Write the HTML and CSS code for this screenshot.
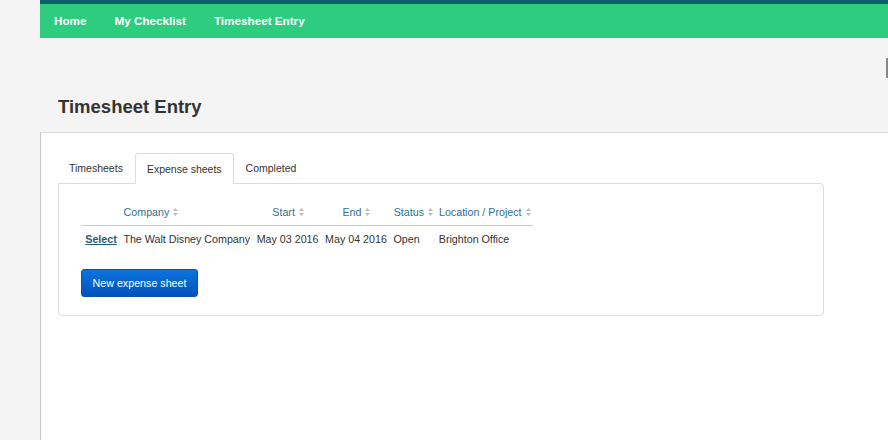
FILE: index.html
```html
<!DOCTYPE html>
<html lang="en">

<head>
    <meta charset="UTF-8">
    <meta name="viewport" content="width=device-width, initial-scale=1.0">
    <title>Timesheet Entry</title>
    <link rel="stylesheet" href="styles.css">
</head>

<body>
    <div class="page">
        <div class="top-strip"></div>
        <div class="main-nav">
            <a href="#">Home</a>
            <a href="#">My Checklist</a>
            <a href="#">Timesheet Entry</a>
        </div>

        <div class="page-header">
            <h1>Timesheet Entry</h1>
        </div>

        <div class="panel">
            <div class="tabs">
                <a href="#" class="tab">Timesheets</a>
                <a href="#" class="tab active">Expense sheets</a>
                <a href="#" class="tab">Completed</a>
            </div>
            <div class="tab-content">
                <table class="sheets">
                    <thead>
                        <tr>
                            <th></th>
                            <th>Company <span class="sort"><svg width="5" height="8" viewBox="0 0 5 8"><path d="M2.5 0 L5 3 H0 Z M2.5 8 L5 5 H0 Z"/></svg></span></th>
                            <th class="center">Start <span class="sort"><svg width="5" height="8" viewBox="0 0 5 8"><path d="M2.5 0 L5 3 H0 Z M2.5 8 L5 5 H0 Z"/></svg></span></th>
                            <th class="center">End <span class="sort"><svg width="5" height="8" viewBox="0 0 5 8"><path d="M2.5 0 L5 3 H0 Z M2.5 8 L5 5 H0 Z"/></svg></span></th>
                            <th>Status <span class="sort"><svg width="5" height="8" viewBox="0 0 5 8"><path d="M2.5 0 L5 3 H0 Z M2.5 8 L5 5 H0 Z"/></svg></span></th>
                            <th>Location / Project <span class="sort"><svg width="5" height="8" viewBox="0 0 5 8"><path d="M2.5 0 L5 3 H0 Z M2.5 8 L5 5 H0 Z"/></svg></span></th>
                        </tr>
                    </thead>
                    <tbody>
                        <tr>
                            <td><a href="#" class="select-link">Select</a></td>
                            <td>The Walt Disney Company</td>
                            <td>May 03 2016</td>
                            <td>May 04 2016</td>
                            <td>Open</td>
                            <td>Brighton Office</td>
                        </tr>
                    </tbody>
                </table>
                <button class="btn-primary">New expense sheet</button>
            </div>
        </div>
    </div>
    <div class="edge-mark"></div>
</body>

</html>
```

FILE: styles.css
```css
* {
    margin: 0;
    padding: 0;
    box-sizing: border-box;
}

body {
    font-family: 'Liberation Sans', Arial, sans-serif;
    background-color: #f4f4f4;
    color: #333;
    font-size: 10.7px;
    height: 100vh;
    overflow: hidden;
    position: relative;
}

.page {
    margin-left: 40px;
    height: 100%;
    display: flex;
    flex-direction: column;
}

.top-strip {
    height: 4px;
    background-color: #0d5f6c;
}

.main-nav {
    height: 34px;
    background-color: #2dcc7f;
    display: flex;
    align-items: center;
    gap: 28px;
    padding: 0 0 2px 14px;
}

.main-nav a {
    color: #fff;
    text-decoration: none;
    font-weight: bold;
    font-size: 11.7px;
}

.page-header {
    height: 94px;
    padding: 59px 0 0 18px;
}

h1 {
    font-size: 18.5px;
    line-height: 20px;
    color: #333;
}

.panel {
    flex: 1;
    background-color: #fff;
    border-top: 1px solid #ddd;
    border-left: 1px solid #c6c6c6;
    padding: 19px 0 0 17px;
}

.tabs {
    display: flex;
    height: 31px;
}

.tab {
    display: block;
    padding: 0 11px;
    line-height: 30px;
    font-size: 10.5px;
    color: #333;
    text-decoration: none;
    border: 1px solid transparent;
    border-bottom: none;
    border-radius: 3px 3px 0 0;
}

.tab:first-child {
    padding-left: 10px;
}

.tab.active {
    background-color: #fff;
    border-color: #ddd;
    position: relative;
    top: 1px;
    height: 31px;
}

.tab-content {
    width: 766px;
    height: 133px;
    border: 1px solid #ddd;
    border-radius: 0 4px 4px 4px;
    padding: 16px 0 0 22px;
}

.sheets {
    border-collapse: collapse;
}

.sheets th {
    font-weight: normal;
    color: #31708f;
    text-align: left;
    padding: 0 2.5px 0 3.5px;
    height: 25px;
    border-bottom: 1px solid #ccc;
    white-space: nowrap;
}

.sheets th.center {
    text-align: center;
}

.sheets td {
    padding: 0 3.3px;
    height: 28px;
    white-space: nowrap;
}

.sort svg {
    fill: #bbb;
    margin-left: 1px;
}

.select-link {
    color: #1e5d7a;
    font-weight: bold;
    text-decoration: underline;
    margin-left: 1px;
}

.btn-primary {
    display: block;
    margin-top: 16px;
    width: 117px;
    height: 28px;
    border: 1px solid #0a52aa;
    border-radius: 3px;
    background: linear-gradient(#0c74dc, #0152bb);
    color: #fff;
    font-family: 'Liberation Sans', Arial, sans-serif;
    font-size: 10.7px;
}

.edge-mark {
    position: absolute;
    right: 0;
    top: 58px;
    width: 2px;
    height: 20px;
    background-color: #888;
}
```
